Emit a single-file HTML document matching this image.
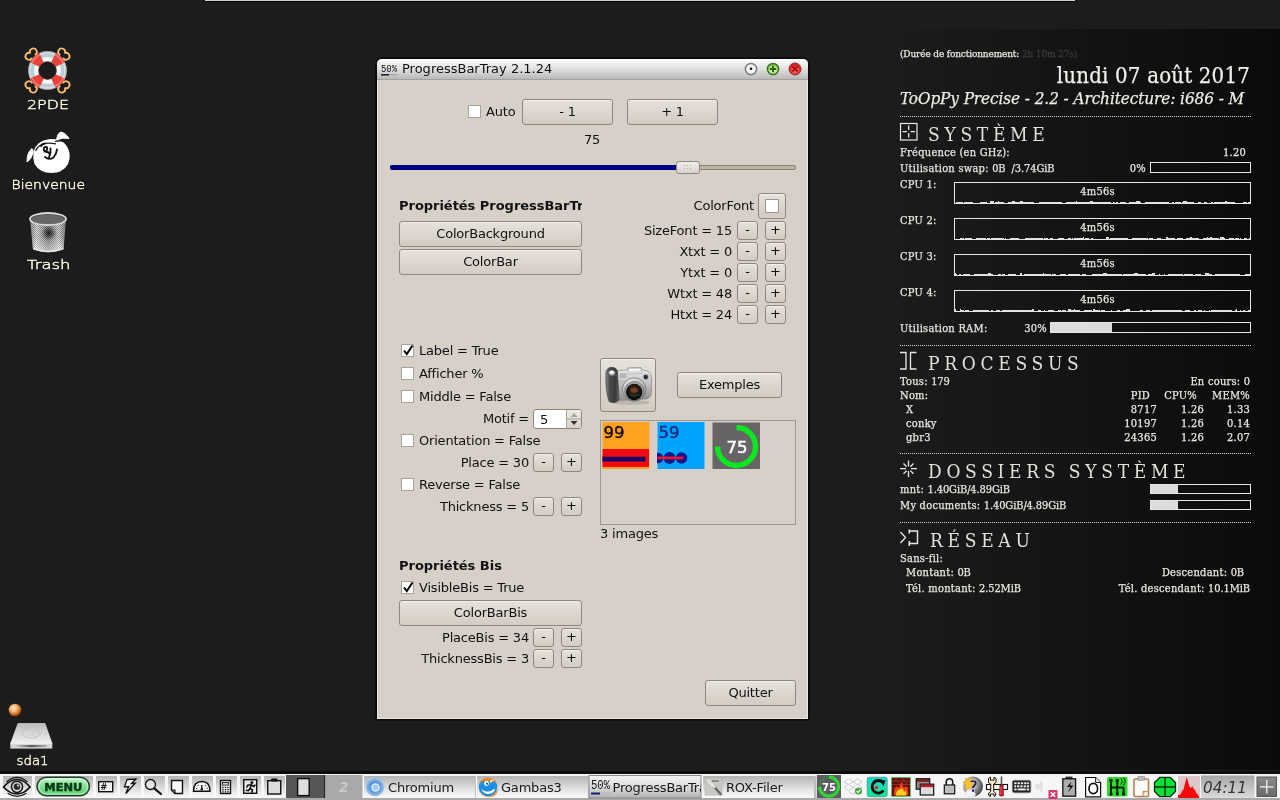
<!DOCTYPE html>
<html><head><meta charset="utf-8"><title>ProgressBarTray</title>
<style>
*{box-sizing:border-box;margin:0;padding:0}
html,body{width:1280px;height:800px;overflow:hidden;background:#1c1c1c}
body{position:relative;font-family:"DejaVu Sans","Liberation Sans",sans-serif;font-size:13px;color:#111}
.abs{position:absolute}
body>*{will-change:transform}
#topline{left:205px;top:0;width:870px;height:2px;background:linear-gradient(#cfcfcf 0 1px,#050505 1px 2px)}
#barshadow{left:0;top:771px;width:1280px;height:3px;background:#0d0d0d}
/* desktop icons */
.dlabel{position:absolute;color:#f4ecd4;font-family:"DejaVu Sans","Liberation Sans",sans-serif;font-size:13px;text-align:center;white-space:nowrap;letter-spacing:.5px}
/* window */
#win{left:376px;top:58px;width:433px;height:662px;background:#d6d0c8;border:1px solid #0a0a0a;border-radius:6px 6px 1px 1px;overflow:hidden;box-shadow:0 0 0 1px rgba(8,8,8,.6)}
#win>*{margin-left:1px;margin-top:1px}
#win::after{content:"";position:absolute;left:0;top:21px;right:0;bottom:0;border:1px solid #e9e5df;border-top:0;pointer-events:none}
#title{position:absolute;left:0;top:0;width:431px;height:21px;margin:0!important;padding:0;background:linear-gradient(#fdfdfd,#e4e4e4 45%,#b9b9b9);border-bottom:1px solid #a5a29c}
#title .t{position:absolute;left:25px;top:2px;font-size:13px;line-height:16px;color:#111}
.btn{position:absolute;border:1px solid #8d877f;border-radius:3px;background:linear-gradient(#e6e1da,#d2ccc3);text-align:center;font-size:13px;letter-spacing:-.2px;color:#111;box-shadow:inset 0 1px 0 #f3f0ec}
.lbl{position:absolute;font-size:13px;letter-spacing:-.2px;white-space:nowrap;color:#111;line-height:16px}
.r{text-align:right}
.btn.sm{width:21px;height:19px;line-height:15px;letter-spacing:0;font-size:13px}
.cb{position:absolute;width:13px;height:13px;background:#fff;border:1px solid #a9a39a}

#grad{left:890px;top:29px;width:390px;height:741px;background:linear-gradient(90deg,rgba(12,12,12,0),#0b0b0b)}
#conky{left:0;top:0;width:1280px;height:0;font-family:"DejaVu Serif Condensed","DejaVu Serif","Liberation Serif",serif;color:#e9e6df;font-size:11px}
#conky .c{position:absolute;white-space:nowrap;line-height:14px;letter-spacing:.25px;font-size:11px;-webkit-text-stroke:.25px #e9e6df}
#conky .c b{font-weight:normal;letter-spacing:-.1px}
#conky .cr{text-align:right}
#conky .h{position:absolute;left:928px;font-size:19px;line-height:24px;letter-spacing:4.7px;word-spacing:-1.500px;white-space:nowrap;color:#e4e1db}
#conky .dot{position:absolute;left:900px;width:351px;height:1px;background:repeating-linear-gradient(90deg,#d8d8d8 0 1px,transparent 1px 2px)}
#conky .bx{position:absolute;border:1px solid #e6e6e6}
#conky .fill{position:absolute;left:0;top:0;height:100%;background:#dcdcdc}
</style></head><body>
<div id="topline" class="abs"></div>
<div id="barshadow" class="abs"></div>

<!-- ICONS -->
<svg class="abs" style="left:0;top:30px" width="120" height="250" viewBox="0 30 120 250" font-family="DejaVu Sans,Liberation Sans,sans-serif">
<defs>
<radialGradient id="lbw" cx=".5" cy=".5" r=".5"><stop offset=".45" stop-color="#b4c6cc"/><stop offset=".6" stop-color="#ffffff"/><stop offset=".9" stop-color="#f2f8f8"/><stop offset="1" stop-color="#bccdd2"/></radialGradient>
<radialGradient id="lbr" cx=".5" cy=".5" r=".5"><stop offset=".45" stop-color="#8a1010"/><stop offset=".62" stop-color="#e23a32"/><stop offset=".8" stop-color="#f25a4e"/><stop offset="1" stop-color="#a81818"/></radialGradient>
<linearGradient id="trb" x1="0" y1="0" x2="1" y2="0"><stop offset="0" stop-color="#9a9a9a"/><stop offset=".18" stop-color="#e2e2e2"/><stop offset=".5" stop-color="#8a8a8a"/><stop offset=".8" stop-color="#dadada"/><stop offset="1" stop-color="#8a8a8a"/></linearGradient>
<linearGradient id="trv" x1="0" y1="0" x2="0" y2="1"><stop offset="0" stop-color="#fff" stop-opacity="0"/><stop offset=".55" stop-color="#fff" stop-opacity=".05"/><stop offset="1" stop-color="#fff" stop-opacity=".55"/></linearGradient>
<pattern id="mesh" width="2" height="2" patternUnits="userSpaceOnUse"><rect width="1" height="1" fill="#111" opacity=".38"/><rect x="1" y="1" width="1" height="1" fill="#111" opacity=".38"/></pattern>
<radialGradient id="trd" cx=".5" cy=".45" r=".35"><stop offset="0" stop-color="#000" stop-opacity=".75"/><stop offset="1" stop-color="#000" stop-opacity="0"/></radialGradient>
</defs>
<g transform="translate(47.500 70.500)" fill="none" stroke="#f6bf72" stroke-width="1.800" stroke-linecap="round" stroke-linejoin="round">
<g transform="rotate(45)"><path d="M-2.600 -17 L-2.600 -19.700 A3.500 3.500 0 1 1 0 -24.800 A3.500 3.500 0 1 1 2.600 -19.700 L2.600 -17"/><path d="M-2.600 17 L-2.600 19.700 A3.500 3.500 0 1 0 0 24.800 A3.500 3.500 0 1 0 2.600 19.700 L2.600 17"/></g>
<g transform="rotate(-45)"><path d="M-2.600 -17 L-2.600 -19.700 A3.500 3.500 0 1 1 0 -24.800 A3.500 3.500 0 1 1 2.600 -19.700 L2.600 -17"/><path d="M-2.600 17 L-2.600 19.700 A3.500 3.500 0 1 0 0 24.800 A3.500 3.500 0 1 0 2.600 19.700 L2.600 17"/></g>
</g>
<circle cx="47.500" cy="70.500" r="14.100" fill="none" stroke="url(#lbw)" stroke-width="10.200"/>
<path d="M64.90 78.61A19.2 19.2 0 0 1 55.61 87.90L51.30 78.66A9 9 0 0 0 55.66 74.30Z" fill="#e8423a"/>
<path d="M39.39 87.90A19.2 19.2 0 0 1 30.10 78.61L39.34 74.30A9 9 0 0 0 43.70 78.66Z" fill="#e8423a"/>
<path d="M30.10 62.39A19.2 19.2 0 0 1 39.39 53.10L43.70 62.34A9 9 0 0 0 39.34 66.70Z" fill="#e8423a"/>
<path d="M55.61 53.10A19.2 19.2 0 0 1 64.90 62.39L55.66 66.70A9 9 0 0 0 51.30 62.34Z" fill="#e8423a"/>
<circle cx="47.500" cy="70.500" r="17.300" fill="none" stroke="#fff" stroke-width="1.200" opacity=".35"/>
<circle cx="47.500" cy="70.500" r="19.200" fill="none" stroke="#c9a0a0" stroke-width=".6" opacity=".6"/>
<circle cx="47.500" cy="70.500" r="9" fill="none" stroke="#7a2020" stroke-width=".8" opacity=".7"/>
<path d="M33.500 152 Q36 141 50 139 Q66 138 69.500 153 Q71 168 57 172.500 Q41 175 34.500 164 Q32.500 158 33.500 152Z" fill="#fff"/>
<path d="M32 148.500 Q27 152 27 162 Q31 160 33 153 Q33.500 150 32 148.500Z" fill="#fff" stroke="#fff" stroke-width="1"/>
<path d="M56.500 140 Q57 134 60.500 132 Q66 133 69 138.500 Q63 137 56.500 140Z" fill="#fff" stroke="#fff" stroke-width="1"/>
<path d="M55 141.500Q60 140 66 141.500" stroke="#1c1c1c" stroke-width="1.300" fill="none"/>
<path d="M35.500 151 Q38.500 144 46 143.300 Q51 143 56 143.800" stroke="#1c1c1c" stroke-width="1.200" fill="none"/>
<g fill="none" stroke="#111" stroke-width="1.900" stroke-linecap="round"><path d="M44 150.500q-1 -4 2.500 -3.500q2 2 -1 4.500q3.500 .5 4.500 2.500"/><path d="M50.500 148.500q.5 4 -1.500 9"/><path d="M45 157q4 3.500 8.500 .5q3 -3.500 3.500 -8"/><path d="M41 146q1.500 -2.500 4 -2.500"/></g>
<path d="M30 219 L33 249.500 Q48 255 63.500 249.500 L66 219 Z" fill="url(#trb)"/>
<path d="M30 219 L33 249.500 Q48 255 63.500 249.500 L66 219 Z" fill="url(#mesh)"/>
<path d="M30 219 L33 249.500 Q48 255 63.500 249.500 L66 219 Z" fill="url(#trv)"/>
<ellipse cx="49" cy="234" rx="11" ry="10" fill="url(#trd)"/>
<ellipse cx="48" cy="219" rx="18" ry="6" fill="#4a4a4a" stroke="#dcdcdc" stroke-width="1.800"/><ellipse cx="48" cy="219.500" rx="16.500" ry="4.800" fill="url(#mesh)"/><ellipse cx="48" cy="219.500" rx="16.500" ry="4.800" fill="#999" opacity=".45"/>
<path d="M34 248.500 Q48 254.500 63 248.500" fill="none" stroke="#eee" stroke-width="1.300" opacity=".85"/>
<text x="27" y="109" font-size="11.800" font-weight="200" fill="#fffae6" stroke="#fffae6" stroke-width=".38" textLength="42" lengthAdjust="spacingAndGlyphs">2PDE</text>
<text x="11.5" y="189" font-size="11.800" font-weight="200" fill="#fffae6" stroke="#fffae6" stroke-width=".38" textLength="73.5" lengthAdjust="spacingAndGlyphs">Bienvenue</text>
<text x="27" y="269" font-size="11.800" font-weight="200" fill="#fffae6" stroke="#fffae6" stroke-width=".38" textLength="43.5" lengthAdjust="spacingAndGlyphs">Trash</text>
</svg>
<svg class="abs" style="left:0;top:696px" width="80" height="76" viewBox="0 696 80 76" font-family="DejaVu Sans,Liberation Sans,sans-serif">
<defs><radialGradient id="ob" cx=".4" cy=".35" r=".65"><stop offset="0" stop-color="#fff0d8"/><stop offset=".4" stop-color="#f6b878"/><stop offset=".8" stop-color="#c86a1a"/><stop offset="1" stop-color="#7a3c0a"/></radialGradient>
<linearGradient id="dv" x1="0" y1="0" x2="0" y2="1"><stop offset="0" stop-color="#bdbdbd"/><stop offset="1" stop-color="#f2f2f2"/></linearGradient>
<linearGradient id="dvf" x1="0" y1="0" x2="1" y2="0"><stop offset="0" stop-color="#cfcfcf"/><stop offset=".5" stop-color="#555"/><stop offset="1" stop-color="#bdbdbd"/></linearGradient></defs>
<circle cx="15" cy="710" r="6.300" fill="url(#ob)"/>
<path d="M18 723.500h27l7.300 20.500h-42z" fill="url(#dv)" stroke="#e8e8e8" stroke-width=".6"/>
<ellipse cx="31" cy="733" rx="9" ry="5" fill="none" stroke="#c4c4c4" stroke-width="1.200" opacity=".8"/><ellipse cx="31" cy="733" rx="4.500" ry="2.300" fill="none" stroke="#cdcdcd" stroke-width=".8"/>
<rect x="10.300" y="744" width="42" height="4.600" fill="#d6d6d6"/><rect x="16" y="745" width="31" height="2.200" fill="url(#dvf)"/>
<text x="16.500" y="765" font-size="11.800" font-weight="200" fill="#fffae6" stroke="#fffae6" stroke-width=".38" textLength="32" lengthAdjust="spacingAndGlyphs">sda1</text>
</svg>

<!-- WINDOW -->
<div id="win" class="abs">
<div id="title"><svg class="abs" style="left:4px;top:4px" width="19" height="14" viewBox="0 0 19 14"><text x="0" y="8.500" font-family="Liberation Mono,monospace" font-size="10" textLength="16" lengthAdjust="spacingAndGlyphs" fill="#111">50%</text><rect x="0" y="11" width="8" height="1.600" fill="#223"/><rect x="8" y="11.300" width="8" height="1" fill="#999"/></svg><span class="t">ProgressBarTray 2.1.24</span>
<svg class="abs" style="left:366px;top:1px" width="60" height="18" viewBox="0 0 60 18">
<defs><radialGradient id="wr" cx=".5" cy=".6" r=".6"><stop offset="0" stop-color="#ff9a9a"/><stop offset=".6" stop-color="#e23434"/><stop offset="1" stop-color="#b01c1c"/></radialGradient>
<radialGradient id="wg" cx=".5" cy=".65" r=".6"><stop offset="0" stop-color="#e4ffc8"/><stop offset=".7" stop-color="#a8e078"/><stop offset="1" stop-color="#6aa83a"/></radialGradient></defs>
<circle cx="8" cy="9" r="5.600" fill="#f4f4f4" stroke="#7c7c7c" stroke-width="1.500"/><circle cx="8" cy="8.800" r="1.300" fill="#111"/>
<circle cx="30" cy="9" r="5.600" fill="url(#wg)" stroke="#3f6f1f" stroke-width="1.500"/><path d="M26.800 9h6.400M30 5.800v6.400" stroke="#2f6a10" stroke-width="2"/>
<circle cx="52" cy="9" r="6" fill="url(#wr)" stroke="#a42424" stroke-width="1"/><path d="M49.500 6.500l5 5M54.500 6.500l-5 5" stroke="#b00c0c" stroke-width="2"/>
</svg>
</div>
<!-- row 1 -->
<div class="cb" style="left:90px;top:45px"></div>
<div class="lbl" style="left:108px;top:44px">Auto</div>
<div class="btn" style="left:144px;top:39px;width:91px;height:26px;line-height:23px">- 1</div>
<div class="btn" style="left:249px;top:39px;width:91px;height:26px;line-height:23px">+ 1</div>
<div class="lbl" style="left:206px;top:72px">75</div>
<!-- slider -->
<div class="abs" style="left:12px;top:105px;width:406px;height:5px;border:1px solid #8a8172;background:#bcb4a5;border-radius:2px"></div>
<div class="abs" style="left:12px;top:105px;width:290px;height:5px;background:#00007f;border-radius:2px"></div>
<div class="abs" style="left:298px;top:101px;width:24px;height:13px;border:1px solid #8d877f;border-radius:3px;background:linear-gradient(#f1eeea,#d8d3cb);"></div>
<div class="abs" style="left:305px;top:104px;width:10px;height:7px;background-image:radial-gradient(circle,#c99 0.6px,transparent 0.8px);background-size:3px 3px"></div>
<!-- props -->
<div class="lbl" style="left:21px;top:138px;width:183px;overflow:hidden;font-weight:bold;letter-spacing:-.03px">Propriétés ProgressBarTray</div>
<div class="btn" style="left:21px;top:161px;width:183px;height:26px;line-height:23px">ColorBackground</div>
<div class="btn" style="left:21px;top:189px;width:183px;height:26px;line-height:23px">ColorBar</div>
<div class="lbl r" style="right:54px;top:138px">ColorFont</div>
<div class="btn" style="left:380px;top:133px;width:28px;height:26px"><div class="abs" style="left:6px;top:5px;width:14px;height:14px;background:#fff;border:1px solid #9a958e"></div></div>
<div class="lbl r" style="right:76px;top:163px">SizeFont = 15</div><div class="btn sm" style="left:359px;top:161px">-</div><div class="btn sm" style="left:387px;top:161px">+</div>
<div class="lbl r" style="right:76px;top:184px">Xtxt = 0</div><div class="btn sm" style="left:359px;top:182px">-</div><div class="btn sm" style="left:387px;top:182px">+</div>
<div class="lbl r" style="right:76px;top:205px">Ytxt = 0</div><div class="btn sm" style="left:359px;top:203px">-</div><div class="btn sm" style="left:387px;top:203px">+</div>
<div class="lbl r" style="right:76px;top:226px">Wtxt = 48</div><div class="btn sm" style="left:359px;top:224px">-</div><div class="btn sm" style="left:387px;top:224px">+</div>
<div class="lbl r" style="right:76px;top:247px">Htxt = 24</div><div class="btn sm" style="left:359px;top:245px">-</div><div class="btn sm" style="left:387px;top:245px">+</div>

<!-- checks -->
<div class="cb" style="left:23px;top:284px"></div><svg class="abs" style="left:24px;top:284px" width="13" height="13" viewBox="0 0 13 13"><path d="M2 6.500l2.800 3.500L10.500 1.500" fill="none" stroke="#000" stroke-width="2"/></svg>
<div class="lbl" style="left:41px;top:283px">Label = True</div>
<div class="cb" style="left:23px;top:307px"></div>
<div class="lbl" style="left:41px;top:306px">Afficher %</div>
<div class="cb" style="left:23px;top:330px"></div>
<div class="lbl" style="left:41px;top:329px">Middle = False</div>
<div class="lbl r" style="right:279px;top:351px">Motif =</div>
<div class="abs" style="left:155px;top:349px;width:49px;height:20px;border:1px solid #8d877f;border-radius:3px;background:#fff"><span class="lbl" style="left:6px;top:2px">5</span><div class="abs" style="right:0;top:0;width:15px;height:18px;background:linear-gradient(#eeeae5,#d5d0c8);border-left:1px solid #aaa49b;border-radius:0 2px 2px 0"><svg width="14" height="18" viewBox="0 0 14 18"><path d="M3.500 7L7 3l3.500 4z" fill="#aaa49b"/><path d="M3.500 11L7 15l3.500-4z" fill="#333"/><path d="M0 9h14" stroke="#aaa49b" stroke-width="1"/></svg></div></div>
<div class="cb" style="left:23px;top:374px"></div>
<div class="lbl" style="left:41px;top:373px">Orientation = False</div>
<div class="lbl r" style="right:279px;top:395px">Place = 30</div>
<div class="btn sm" style="left:155px;top:393px">-</div><div class="btn sm" style="left:183px;top:393px">+</div>
<div class="cb" style="left:23px;top:418px"></div>
<div class="lbl" style="left:41px;top:417px">Reverse = False</div>
<div class="lbl r" style="right:279px;top:439px">Thickness = 5</div>
<div class="btn sm" style="left:155px;top:437px">-</div><div class="btn sm" style="left:183px;top:437px">+</div>
<!-- camera / exemples -->
<div class="btn" style="left:222px;top:298px;width:56px;height:54px" id="cam"><svg class="abs" style="left:3px;top:3px" width="48" height="48" viewBox="0 0 48 48">
<defs><linearGradient id="cg1" x1="0" y1="0" x2="1" y2="0"><stop offset="0" stop-color="#8e8e8e"/><stop offset=".3" stop-color="#4a4a4a"/><stop offset=".75" stop-color="#3a3a3a"/><stop offset="1" stop-color="#6a6a6a"/></linearGradient>
<linearGradient id="cg2" x1="0" y1="0" x2="0" y2="1"><stop offset="0" stop-color="#f0f0f0"/><stop offset=".45" stop-color="#c6c6c6"/><stop offset="1" stop-color="#8e8e8e"/></linearGradient>
<radialGradient id="cg3" cx=".4" cy=".3" r=".75"><stop offset="0" stop-color="#fafafa"/><stop offset=".55" stop-color="#c4c4c4"/><stop offset="1" stop-color="#7a7a7a"/></radialGradient>
<radialGradient id="cg4" cx=".5" cy=".4" r=".6"><stop offset="0" stop-color="#6a4028"/><stop offset=".4" stop-color="#2a1a10"/><stop offset=".75" stop-color="#0c140c"/><stop offset="1" stop-color="#050505"/></radialGradient></defs>
<ellipse cx="27" cy="40.500" rx="19" ry="2.500" fill="#000" opacity=".12"/>
<path d="M13 11 Q13 8.500 16 8.500 L23 8 L24 5.800 L37 5.500 L38.500 8 L43 9 Q47.500 10.500 47.500 17 L47.500 29 Q47.500 36 42 37 L15 38.500 Z" fill="url(#cg2)" stroke="#7a7a7a" stroke-width=".6"/>
<path d="M24.300 6.300L36.700 6l1.300 5.500l-14 .5z" fill="#dcdcdc" stroke="#9a9a9a" stroke-width=".5"/>
<path d="M25 7l11-.3l.5 2l-11.500.3z" fill="#fafafa" opacity=".9"/>
<rect x="15.500" y="11" width="7" height="5" rx="1" fill="#aaa" opacity=".7"/>
<rect x="15.500" y="18" width="6" height="3" fill="#bbb" opacity=".6"/>
<circle cx="41.800" cy="15" r="2.200" fill="#2a2a2a"/><circle cx="41.800" cy="15" r="3" fill="none" stroke="#999" stroke-width=".6"/>
<path d="M1.800 14 Q1 7 6 5.500 Q11.500 4.500 13.500 9 L15 38 Q11 42.500 5 39.500 Q1.500 30 1.800 14Z" fill="url(#cg1)" stroke="#2c2c2c" stroke-width=".5"/>
<ellipse cx="7.800" cy="11" rx="4" ry="3.300" fill="#8c8c8c" stroke="#333" stroke-width=".6"/>
<ellipse cx="7.800" cy="10.500" rx="2.500" ry="2" fill="#e4e4e4"/><ellipse cx="7.300" cy="10" rx="1.200" ry=".9" fill="#fff"/>
<circle cx="30.200" cy="27.500" r="11.800" fill="url(#cg3)" stroke="#767676" stroke-width=".7"/>
<circle cx="30.200" cy="29" r="9.600" fill="#a4a4a4" stroke="#5c5c5c" stroke-width=".6"/>
<circle cx="30.200" cy="30" r="8.200" fill="url(#cg4)"/>
<ellipse cx="30" cy="28" rx="4" ry="2.500" fill="#8a4a30" opacity=".55"/>
<path d="M25 32.500q5 3 10.500 0" stroke="#2a5a3a" stroke-width="1" fill="none" opacity=".7"/>
</svg></div>
<div class="btn" style="left:299px;top:312px;width:105px;height:26px;line-height:23px">Exemples</div>
<div class="abs" style="left:222px;top:360px;width:196px;height:105px;border:1px solid #9d978f;background:#d6d0c8" id="list"><svg class="abs" style="left:1px;top:1px" width="160" height="50" viewBox="0 0 160 50" font-family="DejaVu Sans,sans-serif">
<defs><clipPath id="t2"><rect x="55" y="0" width="47" height="47"/></clipPath></defs>
<rect x="0.500" y="0" width="47" height="47" fill="#ffa21f"/>
<text x="1.500" y="16" font-size="16" fill="#150800" textLength="21" lengthAdjust="spacingAndGlyphs" stroke="#150800" stroke-width=".4">99</text>
<rect x="0.500" y="27" width="46.500" height="18" fill="#f20a12"/>
<rect x="0.500" y="34.700" width="43" height="4.800" fill="#18006a"/>
<rect x="55.500" y="0" width="47" height="47" fill="#00a4ff"/>
<text x="56.500" y="16" font-size="16" fill="#0a2a78" textLength="21" lengthAdjust="spacingAndGlyphs" stroke="#0a2a78" stroke-width=".4">59</text>
<g fill="#0a1a8c" clip-path="url(#t2)"><circle cx="56" cy="36" r="5.300"/><circle cx="67.500" cy="36" r="6"/><circle cx="79.500" cy="36" r="5.800"/></g>
<rect x="55.500" y="34.500" width="26" height="2.800" fill="#f01030"/>
<rect x="110.500" y="0.500" width="47.500" height="46.500" fill="#666464"/>
<path d="M134.500 5.500 A19 19 0 1 1 115.500 24.500" fill="none" stroke="#0be821" stroke-width="5.400"/>
<text x="135" y="30.500" font-size="16.500" fill="#fff" text-anchor="middle" stroke="#fff" stroke-width=".5">75</text>
</svg></div>
<div class="lbl" style="left:222px;top:466px">3 images</div>
<!-- bis -->
<div class="lbl" style="left:21px;top:498px;font-weight:bold;letter-spacing:-.03px">Propriétés Bis</div>
<div class="cb" style="left:23px;top:521px"></div><svg class="abs" style="left:24px;top:521px" width="13" height="13" viewBox="0 0 13 13"><path d="M2 6.500l2.800 3.500L10.500 1.500" fill="none" stroke="#000" stroke-width="2"/></svg>
<div class="lbl" style="left:41px;top:520px">VisibleBis = True</div>
<div class="btn" style="left:21px;top:540px;width:183px;height:26px;line-height:23px">ColorBarBis</div>
<div class="lbl r" style="right:279px;top:570px">PlaceBis = 34</div>
<div class="btn sm" style="left:155px;top:568px">-</div><div class="btn sm" style="left:183px;top:568px">+</div>
<div class="lbl r" style="right:279px;top:591px">ThicknessBis = 3</div>
<div class="btn sm" style="left:155px;top:589px">-</div><div class="btn sm" style="left:183px;top:589px">+</div>
<div class="btn" style="left:327px;top:620px;width:91px;height:26px;line-height:23px">Quitter</div>
</div>

<!-- CONKY -->
<div id="grad" class="abs"></div>
<div id="conky" class="abs">
<div class="c" style="left:900px;top:47px;font-size:10px;letter-spacing:-.15px">(Durée de fonctionnement: <span style="color:#3b3b3b;-webkit-text-stroke:.25px #3b3b3b">2h 10m 27s)</span></div>
<div class="c cr" style="right:30px;top:62px;font-size:22px;line-height:28px;letter-spacing:.2px;color:#f3f1ec">lundi 07 août 2017</div>
<div class="c" style="left:900px;top:87px;font-size:17px;line-height:22px;font-style:italic;letter-spacing:-.08px;color:#f0ede6">ToOpPy Precise - 2.2 - Architecture: i686 - M</div>
<div class="dot" style="top:116px"></div>
<svg class="abs" style="left:899px;top:122px" width="20" height="20" viewBox="0 0 20 20"><rect x="1.500" y="1.500" width="16.500" height="16.500" fill="none" stroke="#e8e8e8" stroke-width="1.200"/><path d="M9.700 3.500v4.500M9.700 11v4.500M3.500 9.700h4.500M11.500 9.700h4.500" stroke="#e8e8e8" stroke-width="1.300"/></svg>
<div class="h" style="top:122px">SYSTÈME</div>
<div class="c" style="left:900px;top:146px">Fréquence (en GHz):</div>
<div class="c cr" style="right:34px;top:146px">1.20</div>
<div class="c" style="left:900px;top:162px">Utilisation swap: <b>0B&nbsp; /3.74GiB</b></div>
<div class="c cr" style="right:134px;top:162px">0%</div>
<div class="bx" style="left:1150px;top:162px;width:101px;height:11px"></div>
<div class="c" style="left:900px;top:178px">CPU 1:</div>
<div class="bx" style="left:954px;top:182px;width:297px;height:22px"><svg class="abs" style="left:0;top:0" width="295" height="20" viewBox="0 0 295 20"><path d="M0 20V20h1V19h3V19h3V19h1V20h1V19h3V19h1V19h2V19h1V19h1V19h1V20h4V20h3V19h3V19h4V20h3V18h4V20h1V19h3V18h1V19h4V19h1V20h2V20h2V19h4V18h3V19h1V19h4V18h3V19h4V19h1V19h3V19h1V19h2V20h4V20h1V19h3V19h1V19h2V19h4V19h3V19h1V19h1V19h4V19h4V20h4V19h4V19h2V19h4V18h1V19h4V19h4V19h1V19h1V19h2V19h1V18h3V19h2V19h1V19h4V19h2V19h1V19h1V19h1V19h4V19h2V20h1V20h1V19h2V20h1V19h1V19h1V20h2V19h1V19h2V19h2V19h1V20h3V19h1V19h2V19h4V18h4V19h1V20h3V20h1V19h4V19h4V19h4V19h4V19h3V19h2V19h3V20h2V20h1V19h2V20h1V19h2V19h3V19h1V20h1V19h1V18h4V19h4V19h3V20h1V20h3V19h3V20h3V19h3V20h4V19h2V20h1V19h4V19h2V19h2V19h3V18h2V19h4V19h4V20h1V20h1V20h4V20h2V19h2V19h2V20h1V19h4V20Z" fill="#e0e0e0"/></svg><div class="c" style="left:0;width:285px;top:2px;text-align:center">4m56s</div></div>
<div class="c" style="left:900px;top:214px">CPU 2:</div>
<div class="bx" style="left:954px;top:218px;width:297px;height:22px"><svg class="abs" style="left:0;top:0" width="295" height="20" viewBox="0 0 295 20"><path d="M0 20V20h3V20h1V20h1V19h4V20h1V19h3V19h4V20h3V20h1V19h2V19h3V19h3V19h2V20h1V19h3V20h1V19h1V19h4V19h4V19h4V20h1V19h1V20h4V19h4V19h2V19h3V20h4V20h2V19h3V19h1V19h2V19h4V19h4V19h4V20h1V19h2V19h2V20h2V19h3V20h3V20h1V20h1V19h1V19h3V19h1V19h1V20h4V19h3V20h1V19h1V20h1V19h4V19h4V19h1V18h1V20h1V19h4V20h2V19h2V20h3V20h4V20h4V20h2V18h3V20h1V19h3V19h1V19h1V19h3V19h3V19h1V19h3V19h2V19h1V20h3V20h1V19h4V19h1V19h3V19h4V19h4V20h1V19h3V19h1V20h4V19h1V19h3V20h2V20h3V18h2V19h2V19h2V19h2V19h1V20h2V19h4V19h2V20h3V19h4V18h2V19h4V19h3V20h4V19h1V19h1V19h2V18h1V19h2V18h2V19h4V19h3V20h1V18h4V19h1V20h4V19h1V19h1V19h3V20h1V19h3V19h1V20h1V19h1V20h3V19h2V19h1V20h2V19h1V20Z" fill="#e0e0e0"/></svg><div class="c" style="left:0;width:285px;top:2px;text-align:center">4m56s</div></div>
<div class="c" style="left:900px;top:250px">CPU 3:</div>
<div class="bx" style="left:954px;top:254px;width:297px;height:22px"><svg class="abs" style="left:0;top:0" width="295" height="20" viewBox="0 0 295 20"><path d="M0 20V18h1V19h1V20h1V20h1V19h2V20h2V19h2V19h2V19h1V19h2V20h4V19h4V19h3V19h3V19h2V19h2V18h3V19h1V19h1V20h4V20h1V19h3V20h1V19h3V20h3V19h4V19h4V20h4V18h2V20h2V19h2V19h3V19h3V19h2V19h1V19h3V19h2V19h1V19h1V19h1V18h1V19h4V19h3V20h1V19h1V19h3V20h4V19h2V19h4V20h2V19h3V19h1V19h2V19h2V19h1V19h3V20h2V19h4V20h2V20h4V19h1V19h2V19h1V19h1V19h1V19h4V19h1V18h4V19h1V19h2V19h4V19h3V19h1V19h4V20h1V19h3V19h1V19h4V19h2V19h1V18h4V19h4V19h4V20h2V19h4V18h3V20h2V20h2V19h1V20h4V19h1V20h2V20h1V19h3V19h1V19h4V19h1V19h1V19h1V19h4V20h1V19h3V19h3V19h3V20h2V19h1V19h1V19h3V19h1V20h4V18h4V19h3V20h3V19h4V19h3V19h3V19h4V19h1V19h2V19h3V19h4V19h1V20h1V20h4V19h1V19h2V19h3V20Z" fill="#e0e0e0"/></svg><div class="c" style="left:0;width:285px;top:2px;text-align:center">4m56s</div></div>
<div class="c" style="left:900px;top:286px">CPU 4:</div>
<div class="bx" style="left:954px;top:290px;width:297px;height:22px"><svg class="abs" style="left:0;top:0" width="295" height="20" viewBox="0 0 295 20"><path d="M0 20V18h1V20h4V18h1V19h2V19h1V20h1V19h4V20h4V19h3V19h1V19h1V19h2V19h1V19h4V19h4V20h2V19h2V20h3V19h4V20h2V19h1V19h2V19h1V19h2V19h4V19h3V19h1V19h2V19h1V19h4V19h4V19h4V19h1V18h2V20h3V20h1V19h3V20h3V19h1V20h3V19h2V19h1V19h1V19h1V19h1V20h3V20h1V19h3V20h1V19h4V20h2V18h3V19h1V19h2V18h1V19h4V19h1V20h4V19h1V19h1V19h4V19h2V20h1V18h2V19h1V19h3V19h1V20h1V19h4V20h2V20h4V19h1V20h4V20h1V19h3V20h3V19h1V19h1V19h1V18h4V20h2V20h3V20h2V20h3V19h2V19h1V20h3V19h1V19h3V20h2V19h1V19h4V19h1V19h4V19h2V19h4V19h2V19h1V19h4V19h3V19h4V20h3V19h1V19h4V20h1V20h3V19h1V19h1V20h2V19h4V20h2V19h1V20h4V19h1V20h1V19h2V19h2V19h3V19h4V19h2V19h1V19h4V19h2V19h1V20h1V20h2V19h1V18h1V20h3V19h1V20h2V19h2V20h3V19h4V20Z" fill="#e0e0e0"/></svg><div class="c" style="left:0;width:285px;top:2px;text-align:center">4m56s</div></div>

<div class="c" style="left:900px;top:322px">Utilisation RAM:</div>
<div class="c cr" style="right:233px;top:322px">30%</div>
<div class="bx" style="left:1050px;top:322px;width:201px;height:11px"><div class="fill" style="width:61px"></div></div>
<div class="dot" style="top:345px"></div>
<svg class="abs" style="left:899px;top:350px" width="20" height="22" viewBox="0 0 20 22"><path d="M1 2.500h6v16.500h-6M17.500 2.500h-6v16.500h6" fill="none" stroke="#e8e8e8" stroke-width="1.300"/></svg>
<div class="h" style="top:351px">PROCESSUS</div>
<div class="c" style="left:900px;top:375px">Tous: <b>179</b></div>
<div class="c cr" style="right:30px;top:375px">En cours: <b>0</b></div>
<div class="c" style="left:900px;top:389px">Nom:</div>
<div class="c cr" style="right:130px;top:389px">PID</div>
<div class="c cr" style="right:83px;top:389px">CPU%</div>
<div class="c cr" style="right:30px;top:389px">MEM%</div>
<div class="c" style="left:906px;top:403px">X</div><div class="c cr" style="right:123px;top:403px">8717</div><div class="c cr" style="right:76px;top:403px">1.26</div><div class="c cr" style="right:30px;top:403px">1.33</div>
<div class="c" style="left:906px;top:417px">conky</div><div class="c cr" style="right:123px;top:417px">10197</div><div class="c cr" style="right:76px;top:417px">1.26</div><div class="c cr" style="right:30px;top:417px">0.14</div>
<div class="c" style="left:906px;top:431px">gbr3</div><div class="c cr" style="right:123px;top:431px">24365</div><div class="c cr" style="right:76px;top:431px">1.26</div><div class="c cr" style="right:30px;top:431px">2.07</div>

<div class="dot" style="top:453px"></div>
<svg class="abs" style="left:899px;top:459px" width="20" height="20" viewBox="0 0 20 20"><g stroke="#e8e8e8" stroke-width="1.300"><path d="M9.500 1.500v6M9.500 12v6M1 9.700h6M12 9.700h6"/><path d="M4.500 4.500l3.200 3.200M14.500 4.500l-3.200 3.200M4.500 14.800l3.200-3.200M14.500 14.800l-3.200-3.200"/></g></svg>
<div class="h" style="top:459px">DOSSIERS SYSTÈME</div>
<div class="c" style="left:900px;top:483px">mnt: <b>1.40GiB/4.89GiB</b></div>
<div class="bx" style="left:1150px;top:484px;width:101px;height:10px"><div class="fill" style="width:27px"></div></div>
<div class="c" style="left:900px;top:499px">My documents: <b>1.40GiB/4.89GiB</b></div>
<div class="bx" style="left:1150px;top:500px;width:101px;height:10px"><div class="fill" style="width:27px"></div></div>
<div class="dot" style="top:522px"></div>
<svg class="abs" style="left:899px;top:527px" width="22" height="22" viewBox="0 0 22 22"><path d="M1.500 5l5 5.500l-5 5.500" fill="none" stroke="#e8e8e8" stroke-width="1.300"/><path d="M10.300 2.500v4M10.300 14v5" stroke="#e8e8e8" stroke-width="1.600"/><path d="M10 4h8.500v12.500h-8.500" fill="none" stroke="#e8e8e8" stroke-width="1.400"/></svg>
<div class="h" style="top:528px;left:930px">RÉSEAU</div>
<div class="c" style="left:900px;top:552px">Sans-fil:</div>
<div class="c" style="left:906px;top:566px">Montant: <b>0B</b></div>
<div class="c cr" style="right:36px;top:566px">Descendant: <b>0B</b></div>
<div class="c" style="left:906px;top:582px">Tél. montant: <b>2.52MiB</b></div>
<div class="c cr" style="right:30px;top:582px">Tél. descendant: <b>10.1MiB</b></div>
</div>


<!-- TASKBAR -->
<svg class="abs" style="left:0;top:774px" width="1280" height="26" viewBox="0 0 1280 26" font-family="DejaVu Sans,Liberation Sans,sans-serif">
<defs>
<linearGradient id="tg" x1="0" y1="0" x2="0" y2="1"><stop offset="0" stop-color="#b4b4b4"/><stop offset=".55" stop-color="#dedede"/><stop offset="1" stop-color="#fbfbfb"/></linearGradient>
<linearGradient id="tga" x1="0" y1="0" x2="0" y2="1"><stop offset="0" stop-color="#f4f4f4"/><stop offset=".5" stop-color="#dcdcdc"/><stop offset="1" stop-color="#b2b2b2"/></linearGradient>
<linearGradient id="mg" x1="0" y1="0" x2="0" y2="1"><stop offset="0" stop-color="#c9f7d2"/><stop offset=".5" stop-color="#7fe093"/><stop offset="1" stop-color="#4fcf6a"/></linearGradient>
<linearGradient id="ck" x1="0" y1="0" x2="0" y2="1"><stop offset="0" stop-color="#a6a6a6"/><stop offset="1" stop-color="#dadada"/></linearGradient>
<linearGradient id="pl" x1="0" y1="0" x2="0" y2="1"><stop offset="0" stop-color="#8a8a8a"/><stop offset="1" stop-color="#6a6a6a"/></linearGradient>
<linearGradient id="cy" x1="0" y1="0" x2="0" y2="1"><stop offset="0" stop-color="#16d4d8"/><stop offset="1" stop-color="#12e58c"/></linearGradient>
<radialGradient id="hp" cx=".35" cy=".4" r=".75"><stop offset="0" stop-color="#f2f2f2"/><stop offset=".5" stop-color="#9a9a9a"/><stop offset="1" stop-color="#2a2a2a"/></radialGradient>
<radialGradient id="chg" cx=".5" cy=".5" r=".5"><stop offset="0" stop-color="#dceeff"/><stop offset=".35" stop-color="#8fc0f0"/><stop offset=".4" stop-color="#3f7fc8"/><stop offset=".7" stop-color="#6aa2de"/><stop offset="1" stop-color="#a8c8ea"/></radialGradient>
</defs>
<rect x="0" y="0" width="1280" height="26" fill="#f2f2f2"/>
<rect x="0" y="2" width="1280" height="22" fill="#f6f6f6"/>
<rect x="0" y="24" width="1280" height="2" fill="#a9a9a9"/>
<rect x="2" y="2" width="30" height="22" fill="url(#tg)"/>
<rect x="2" y="2" width="1" height="22" fill="#fff" opacity=".8"/>
<rect x="34" y="2" width="59" height="22" fill="url(#tg)"/>
<rect x="34" y="2" width="1" height="22" fill="#fff" opacity=".8"/>
<rect x="95" y="2" width="22" height="22" fill="url(#tg)"/>
<rect x="95" y="2" width="1" height="22" fill="#fff" opacity=".8"/>
<rect x="119" y="2" width="22" height="22" fill="url(#tg)"/>
<rect x="119" y="2" width="1" height="22" fill="#fff" opacity=".8"/>
<rect x="143" y="2" width="22" height="22" fill="url(#tg)"/>
<rect x="143" y="2" width="1" height="22" fill="#fff" opacity=".8"/>
<rect x="167" y="2" width="22" height="22" fill="url(#tg)"/>
<rect x="167" y="2" width="1" height="22" fill="#fff" opacity=".8"/>
<rect x="191" y="2" width="22" height="22" fill="url(#tg)"/>
<rect x="191" y="2" width="1" height="22" fill="#fff" opacity=".8"/>
<rect x="215" y="2" width="22" height="22" fill="url(#tg)"/>
<rect x="215" y="2" width="1" height="22" fill="#fff" opacity=".8"/>
<rect x="239" y="2" width="22" height="22" fill="url(#tg)"/>
<rect x="239" y="2" width="1" height="22" fill="#fff" opacity=".8"/>
<rect x="263" y="2" width="22" height="22" fill="url(#tg)"/>
<rect x="263" y="2" width="1" height="22" fill="#fff" opacity=".8"/>
<g fill="none" stroke="#111" stroke-linecap="round"><path d="M3.500 13 Q10 5.500 17 5.500 Q24 5.500 30 13 Q24 20 17 20 Q10 20 3.500 13Z" stroke-width="1.700"/><path d="M7 7.500Q12 3.300 17 3.300Q22 3.300 27 7.500" stroke-width="1.200"/><path d="M8 19.500Q12.500 22.300 17 22.300Q21.500 22.300 26 19.500" stroke-width="1.200"/><circle cx="17" cy="12.800" r="5.600" stroke-width="1.500"/></g><circle cx="17" cy="12.800" r="3.300" fill="#2a2a2a"/><circle cx="18.200" cy="11.600" r="1.100" fill="#ddd"/>
<rect x="37" y="3.200" width="52.500" height="18.600" rx="9.300" fill="url(#mg)" stroke="#2d3b2f" stroke-width="1.500"/><rect x="39" y="5" width="48.500" height="15" rx="7.500" fill="none" stroke="#eafff0" stroke-width="1" opacity=".7"/>
<text x="63.300" y="16.700" font-size="10.500" font-weight="bold" fill="#0c3b14" text-anchor="middle" textLength="38" lengthAdjust="spacingAndGlyphs" stroke="#0c3b14" stroke-width=".5">MENU</text>
<rect x="98.700" y="7.700" width="14" height="10" fill="#f4f4f4" stroke="#111" stroke-width="1.400"/><text x="100.300" y="16" font-size="8.500" font-weight="bold" fill="#111">#</text>
<path d="M127 5.500L136 5L131.500 9.500L135.200 9.300L125.800 19.500L128.800 12.500L124.500 12.800Z" fill="#f4f4f4" stroke="#111" stroke-width="1.300" stroke-linejoin="miter"/>
<circle cx="150.500" cy="10.500" r="5" fill="#f0f0f0" fill-opacity=".6" stroke="#111" stroke-width="1.300"/><path d="M154.200 14.300L161 20" stroke="#111" stroke-width="2.200" stroke-linecap="round"/>
<path d="M171.500 6.500h11v13h-7.500l-3.500-3.500z" fill="#f6f6f6" stroke="#111" stroke-width="1.400"/><path d="M171.500 16h3.500v3.500" fill="none" stroke="#111" stroke-width="1.100"/>
<path d="M193.500 17.200 Q193.500 7.500 202 7.500 Q210 7.500 210 17.200Z" fill="#f2f2f2" stroke="#111" stroke-width="1.400"/><path d="M201.800 15.500v-4.500" stroke="#111" stroke-width="1.300"/><circle cx="201.800" cy="15.300" r="1.200" fill="#111"/><g fill="#111"><circle cx="196.500" cy="14.500" r=".6"/><circle cx="198" cy="11.500" r=".6"/><circle cx="205.500" cy="11.500" r=".6"/><circle cx="207.200" cy="14.500" r=".6"/></g>
<rect x="220.500" y="6.500" width="10" height="13" fill="#f2f2f2" stroke="#111" stroke-width="1.400"/><rect x="222.500" y="8.500" width="6" height="2.600" fill="#ccc" stroke="#111" stroke-width=".8"/><g fill="#111"><rect x="222.300" y="12.800" width="1.400" height="1.300"/><rect x="224.800" y="12.800" width="1.400" height="1.300"/><rect x="227.300" y="12.800" width="1.400" height="1.300"/><rect x="222.300" y="15" width="1.400" height="1.300"/><rect x="224.800" y="15" width="1.400" height="1.300"/><rect x="227.300" y="15" width="1.400" height="1.300"/><rect x="222.300" y="17.200" width="1.400" height="1.300"/><rect x="224.800" y="17.200" width="1.400" height="1.300"/><rect x="227.300" y="17.200" width="1.400" height="1.300"/></g>
<rect x="243.700" y="5.700" width="13" height="13.600" fill="#e8e8e8" stroke="#111" stroke-width="1.400"/><circle cx="251.800" cy="8.600" r="1.500" fill="#111"/><path d="M251.500 10.500L250 14.500M251.200 11L248 11L246.800 13M251.200 11L254 12.500L255 11M250 14.500L252.500 16L251.800 18.300M250 14.500L248.300 16.800L246.300 16.300" fill="none" stroke="#111" stroke-width="1.500" stroke-linecap="round" stroke-linejoin="round"/>
<rect x="267.700" y="6.700" width="13" height="13.300" fill="#dcdcdc" stroke="#111" stroke-width="1.400"/><rect x="271" y="4.600" width="6.500" height="3" rx="1" fill="#111"/>
<rect x="286" y="1" width="38.500" height="23" fill="#565656"/><rect x="297.600" y="4.600" width="11.600" height="17" fill="#dedede" stroke="#0a0a0a" stroke-width="1.400"/>
<rect x="324" y="1" width="1.500" height="23" fill="#222"/><rect x="325.500" y="1" width="37" height="23" fill="#a9a9a9"/>
<text x="343.500" y="18" font-size="14" font-weight="bold" font-style="italic" fill="#c9c9c9" text-anchor="middle">2</text>
<rect x="363" y="2" width="112" height="22" fill="url(#tg)"/><rect x="363" y="2" width="1" height="22" fill="#fff"/><rect x="475" y="2" width="1" height="22" fill="#9a9a9a" opacity=".6"/>
<clipPath id="cp363"><rect x="363" y="0" width="112" height="26"/></clipPath>
<text x="388" y="18" font-size="13" fill="#1a1a1a" letter-spacing="-.2" clip-path="url(#cp363)">Chromium</text>
<rect x="476" y="2" width="112" height="22" fill="url(#tg)"/><rect x="476" y="2" width="1" height="22" fill="#fff"/><rect x="588" y="2" width="1" height="22" fill="#9a9a9a" opacity=".6"/>
<clipPath id="cp476"><rect x="476" y="0" width="112" height="26"/></clipPath>
<text x="501" y="18" font-size="13" fill="#1a1a1a" letter-spacing="-.2" clip-path="url(#cp476)">Gambas3</text>
<rect x="589" y="1.500" width="112" height="22.500" fill="url(#tga)" stroke="#8c8c8c" stroke-width="1"/>
<clipPath id="cp589"><rect x="589" y="0" width="112" height="26"/></clipPath>
<text x="612.5" y="18" font-size="13" fill="#1a1a1a" letter-spacing="-.2" clip-path="url(#cp589)">ProgressBarTray 2.1.24</text>
<rect x="702" y="2" width="112" height="22" fill="url(#tg)"/><rect x="702" y="2" width="1" height="22" fill="#fff"/><rect x="814" y="2" width="1" height="22" fill="#9a9a9a" opacity=".6"/>
<clipPath id="cp702"><rect x="702" y="0" width="112" height="26"/></clipPath>
<text x="726" y="18" font-size="13" fill="#1a1a1a" letter-spacing="-.2" clip-path="url(#cp702)">ROX-Filer</text>
<circle cx="375" cy="13" r="9.300" fill="#a9c7e8"/><circle cx="375" cy="13" r="9.300" fill="url(#chg)" opacity=".9"/><circle cx="375.500" cy="13.500" r="3.600" fill="#9ccaf4" stroke="#e8f3ff" stroke-width="1.300"/>
<circle cx="488" cy="13" r="9.300" fill="#1c8fe0"/><path d="M479.500 9.500A9.300 9.300 0 0 1 496.500 9Q492 6 488 7.500Q483 5.500 479.500 9.500Z" fill="#f28a1c"/><path d="M479 15A9.300 9.300 0 0 0 497.200 14.500Q498.500 19 494 22Q488 24.500 482 21Q479 18 479 15Z" fill="#f28a1c" opacity=".9"/><path d="M481.500 15Q487 20.500 495 14.500Q494.500 19.500 488 20Q483 19.500 481.500 15Z" fill="#fff"/><circle cx="486.500" cy="9.500" r="2.400" fill="#fff"/><circle cx="487" cy="9.800" r="1" fill="#0a3c78"/><path d="M490 8.500l3-2.500" stroke="#fff" stroke-width="1.200"/>
<text x="591" y="14.500" font-family="Liberation Mono,monospace" font-size="12" fill="#111" textLength="19" lengthAdjust="spacingAndGlyphs">50%</text><rect x="591" y="18.500" width="9" height="2" fill="#1a1a70"/><rect x="600" y="18.500" width="10" height="2" fill="#b8b8c8"/>
<rect x="705" y="4" width="17" height="17" fill="#c8c8c4" stroke="#b0b0ac" stroke-width=".6"/><path d="M707 6l3 4M709 5.500l1.500 4" stroke="#eee" stroke-width="1"/><rect x="712" y="6" width="7" height="2" fill="#8c8c88"/><path d="M714 12.500l6.500 7.500" stroke="#6a6a66" stroke-width="2.600" stroke-linecap="round"/><path d="M711.500 10l3 3" stroke="#ededed" stroke-width="2.200" stroke-linecap="round"/>
<rect x="815" y="2" width="1.500" height="22" fill="#bbb"/>
<rect x="817" y="1" width="24" height="23" fill="#5e5a63"/><path d="M829 3.200A9.500 9.500 0 1 1 819.500 12.700" fill="none" stroke="#2fd435" stroke-width="3.200"/><path d="M829 3.200A9.500 9.500 0 0 0 819.500 12.700" fill="none" stroke="#3a8a3e" stroke-width="3.200" opacity=".55"/><text x="829" y="16.500" font-size="10" font-weight="bold" fill="#fff" text-anchor="middle">75</text>
<g fill="#fafafa" stroke="#c9c9c9" stroke-width=".9"><path d="M848.500 5l4.500 2.800l-4.500 2.800l-4.500-2.800z"/><path d="M857.500 5l4.500 2.800l-4.500 2.800l-4.500-2.800z"/><path d="M848.500 10.600l4.500 2.800l-4.500 2.800l-4.500-2.800z"/><path d="M857.500 10.600l4.500 2.800l-4.500 2.800l-4.500-2.800z"/><path d="M848.500 17.500l4.500 2.600l4.500-2.600" fill="none" stroke="#e0b8b8"/></g><circle cx="858.500" cy="17" r="3.600" fill="#4aa84a"/><path d="M856.700 17l1.400 1.500l2.400-2.800" fill="none" stroke="#fff" stroke-width="1.100"/>
<rect x="867.200" y="3.200" width="20" height="19.500" rx="2" fill="url(#cy)" stroke="#4a9a8a" stroke-width=".8"/><path d="M883 8.500A6.300 6.300 0 1 0 883.500 16.500" fill="none" stroke="#0a0a0a" stroke-width="2.800"/><path d="M879.500 6l6 .5l-2 5.500z" fill="#0a0a0a"/><circle cx="876.500" cy="13.500" r="1.700" fill="#e81a2a"/>
<rect x="891.500" y="3.500" width="19" height="19" fill="#5e0e0c" stroke="#3adf5a" stroke-width=".7"/><g stroke="#a03a2a" stroke-width=".8"><path d="M892 7h18M892 10.500h18M892 14h18M896 3.500v3.500M903 3.500v3.500M899 7v3.500M906 7v3.500"/></g><path d="M894 21.500Q893 15 897 12Q897.500 15 899.500 13Q900 9 902.500 8Q902 12 904.500 14Q905.500 12 906 11.500Q909 16 908 21.500Z" fill="#f0401a"/><path d="M896 21.500Q896 17 899 15.500Q900.500 17 901.500 13.500Q904 16 904 18Q905 17 905.500 16.500Q907 19 906 21.500Z" fill="#ffd21a"/>
<rect x="916.200" y="4.700" width="13.500" height="10.500" fill="#8c8c8c" stroke="#111" stroke-width="1.200"/><rect x="916.800" y="5.300" width="12.300" height="2.400" fill="#7a1418"/><rect x="920.200" y="10.200" width="13.500" height="10.800" fill="#dcdcdc" stroke="#111" stroke-width="1.200"/><rect x="920.800" y="10.800" width="12.300" height="2.400" fill="#c8141c"/>
<path d="M946.200 11.500v-3Q946.200 4.800 949.500 4.800Q952.800 4.800 952.800 8.500v3" fill="none" stroke="#111" stroke-width="1.500"/><path d="M947.400 11.500v-3Q947.400 6 949.500 6Q951.600 6 951.600 8.500v3" fill="none" stroke="#ccc" stroke-width=".6"/><rect x="944.300" y="11" width="10.400" height="8.800" fill="#c4c4c4" stroke="#111" stroke-width="1.200"/><path d="M946 14h7M946 16.500h7" stroke="#aaa" stroke-width=".8"/>
<circle cx="973" cy="12.500" r="10" fill="url(#hp)"/><path d="M963 8l3-.5l-.5-3.500l3 2l2-3l1.500 3.500l3-1l-1 4l-4 6l-5-1l1-3.500z" fill="#f6c32a" stroke="#d89a14" stroke-width=".5"/><path d="M966 22Q963.500 20 966 17.500Q966.500 14.500 970 15.500Q974 15 974.500 18.500Q977 20.500 974 22.500Q970 24 966 22Z" fill="#f2f4fa" stroke="#c8ccd8" stroke-width=".4"/><text x="973.500" y="18" font-size="15" font-weight="bold" fill="#14185a" text-anchor="middle" stroke="#fff" stroke-width=".3">?</text>
<rect x="986.500" y="10.500" width="21" height="5" fill="#fff" stroke="#111" stroke-width="1.100"/><path d="M990.500 3.200v3h3.500v-3l2 1.200v4l-2.300 1.600v7.500l2 1.500v2.500l-1.700 1v-2.500h-3.500v2.500l-1.800-1v-2.500l2-1.500v-7.500l-2.200-1.600v-4z" fill="#fbeec8" stroke="#111" stroke-width="1" stroke-linejoin="round"/><path d="M1001.500 2.500v9" stroke="#555" stroke-width="1.600"/><path d="M1000 11h3l.6 10.500q-2.100 1.300-4.200 0z" fill="#d4141c" stroke="#5a0a0a" stroke-width=".6"/><path d="M1001 12.500v8" stroke="#ff8a8a" stroke-width=".7"/>
<rect x="1012.300" y="6.300" width="18.500" height="12.500" rx="2" fill="#222" stroke="#888" stroke-width=".8"/><g fill="#f4f4f4"><rect x="1014.300" y="8.300" width="2.300" height="1.900"/><rect x="1017.600" y="8.300" width="2.300" height="1.900"/><rect x="1020.900" y="8.300" width="2.300" height="1.900"/><rect x="1024.200" y="8.300" width="2.300" height="1.900"/><rect x="1027.300" y="8.300" width="1.800" height="1.900"/><rect x="1014.300" y="11.400" width="1.800" height="1.900"/><rect x="1017" y="11.400" width="2.300" height="1.900"/><rect x="1020.300" y="11.400" width="2.300" height="1.900"/><rect x="1023.600" y="11.400" width="2.300" height="1.900"/><rect x="1026.800" y="11.400" width="2.300" height="1.900"/><rect x="1014.300" y="14.500" width="2.300" height="1.900"/><rect x="1017.600" y="14.500" width="8" height="1.900"/><rect x="1026.600" y="14.500" width="2.500" height="1.900"/></g>
<path d="M1035.500 10h3l4-3.500v12l-4-3.500h-3z" fill="#e2e2e2"/>
<rect x="1048.500" y="16" width="9" height="9" rx="1" fill="#d8346e"/><path d="M1050.800 18.300l4.400 4.400M1055.200 18.300l-4.400 4.400" stroke="#fff" stroke-width="1.600"/>
<rect x="1065.500" y="2.600" width="7" height="2.500" fill="#333"/><rect x="1062.800" y="4.800" width="12.800" height="17.400" fill="#ababab" stroke="#111" stroke-width="1.300"/><path d="M1071.500 7.500l-4.500 5.500h3.500l-2.500 5.500l5.500-7h-3.500z" fill="#0a0a0a"/>
<path d="M1085.600 3.500h10l5 5v14.300h-15z" fill="#fff" stroke="#111" stroke-width="1.200"/><path d="M1095.600 3.500v5h5" fill="#eee" stroke="#111" stroke-width=".9"/><ellipse cx="1093.300" cy="14.500" rx="4.300" ry="5.200" fill="none" stroke="#111" stroke-width="1.700"/>
<rect x="1107" y="3" width="20.500" height="19.500" rx="1.500" fill="#2be02b"/><g stroke="#0a1a0a" stroke-width="2" fill="none"><path d="M1111 8v12M1117.300 8v12M1123.600 13v7M1111 13.500h12.600"/></g><g fill="#0a1a0a"><circle cx="1111" cy="6.500" r="1.800"/><circle cx="1117.300" cy="6.500" r="1.800"/><circle cx="1111" cy="20" r="1.700"/><circle cx="1117.300" cy="20" r="1.700"/><circle cx="1123.600" cy="20" r="1.700"/></g><path d="M1121 4.500q2.500 3 0 6M1123.500 3.500q3.200 4 0 8" stroke="#0a1a0a" stroke-width="1" fill="none"/>
<rect x="1134" y="5" width="14.500" height="17.500" rx="1.500" fill="#fdfdfd" stroke="#b5804e" stroke-width="1.600"/><rect x="1138" y="2.500" width="6.500" height="3.800" fill="#b8b8b8" stroke="#8a8a8a" stroke-width=".6"/><path d="M1143 22v-4.500h4.500" fill="#e8d8c0" stroke="#b5804e" stroke-width=".9"/>
<path d="M1159.800 3.300h10.400l5.300 5.300v8.800l-5.300 5.300h-10.400l-5.300-5.300v-8.800z" fill="#0be03a" stroke="#0a2a0a" stroke-width="1.300"/><path d="M1165 3.500v19M1154.800 13h20.400" stroke="#0a2a0a" stroke-width="1.300"/>
<rect x="1178" y="2" width="22" height="22" fill="#dcc8c8"/><path d="M1178 24v-3l2.500-.5l1.500-3.500l1.500-1.500l1.500-6l1.800-6.500l1.500 5.500l1.200 4l1.500 1.500l1.200-2l1.500 3l1.300 1l1.500 3.500l1.500 1l1 2.500v1z" fill="#f20a0a"/>
<rect x="1201" y="1.500" width="53.500" height="22.500" fill="url(#ck)"/><text x="1203" y="18.500" font-size="15" font-style="italic" fill="#333" textLength="44" lengthAdjust="spacingAndGlyphs">04:11</text>
<rect x="1257" y="3" width="19.500" height="19.500" fill="url(#pl)" stroke="#555" stroke-width="1"/><path d="M1266.800 6v13.500M1260 12.800h13.500" stroke="#f4f4f4" stroke-width="1.300"/>
</svg>
</body></html>
